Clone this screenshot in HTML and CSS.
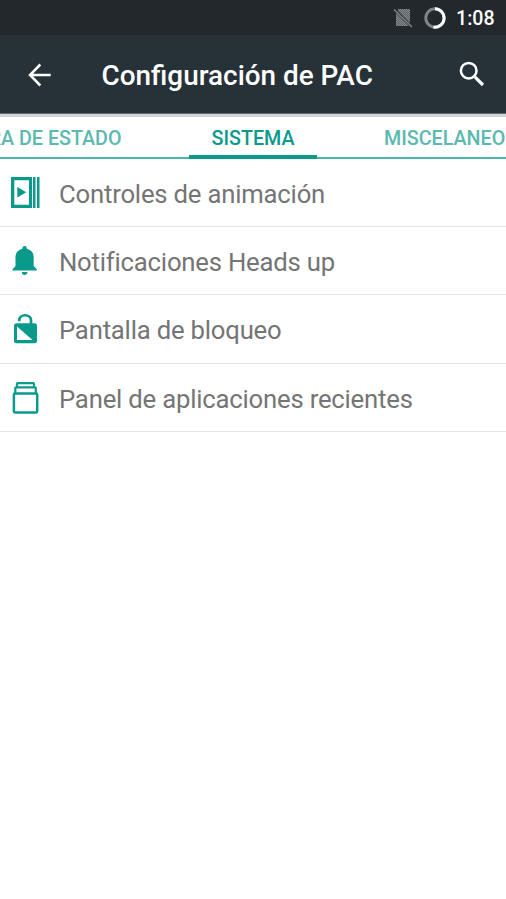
FILE: index.html
```html
<!DOCTYPE html>
<html lang="es">
<head>
<meta charset="utf-8">
<title>Configuración de PAC</title>
<link rel="stylesheet" href="styles.css">
</head>
<body>
<div class="status">
  <svg class="signal" width="20" height="20" viewBox="0 0 20 20">
    <defs><pattern id="mesh" width="2" height="2" patternUnits="userSpaceOnUse"><rect width="2" height="2" fill="#5d6265"/><rect width="1" height="1" fill="#85898b"/><rect x="1" y="1" width="1" height="1" fill="#85898b"/></pattern></defs>
    <path d="M5 1H17V15L5 3Z" fill="url(#mesh)"/>
    <path d="M3 5L16 18H3Z" fill="url(#mesh)"/>
    <path d="M1 1.5L19 19" stroke="#85898b" stroke-width="1.3"/>
  </svg>
  <svg class="ring" width="22" height="22" viewBox="0 0 22 22" fill="none" stroke-width="3">
    <circle cx="11" cy="11" r="9.2" stroke="#808487"/>
    <path d="M11 1.8A9.2 9.2 0 1 1 9.5 20.1" stroke="#fff"/>
  </svg>
  <span class="clock">1:08</span>
</div>
<header class="bar">
  <svg class="back" width="24" height="24" viewBox="0 0 24 24" fill="none" stroke="#fff" stroke-width="2.5"><path d="M12.3 1.5L2 12L12.3 22.5M2 12H22.7"/></svg>
  <h1>Configuración de PAC</h1>
  <svg class="search" width="26" height="26" viewBox="0 0 26 26" fill="none" stroke="#fff"><circle cx="9.7" cy="9.7" r="7.8" stroke-width="2.5"/><path d="M15.8 15.8L24 24" stroke-width="3.2"/></svg>
</header>
<nav class="tabs">
  <span class="tab tab-prev">BARRA DE ESTADO</span>
  <span class="tab tab-active">SISTEMA</span>
  <span class="tab tab-next">MISCELANEO</span>
</nav>
<main>
  <div class="row">
    <svg width="59" height="68" viewBox="0 0 59 68" fill="#0a9a8b">
      <path fill-rule="evenodd" d="M11 18H32V49H11ZM14.3 21.2V45.8H29V21.2Z"/>
      <path d="M17.3 28L26.3 33.2L17.3 38.4ZM33 18H35.5V49H33ZM37 18H39.5V49H37Z"/>
    </svg>
    <span class="label">Controles de animación</span>
  </div>
  <div class="row">
    <svg width="59" height="68" viewBox="0 0 59 68" fill="#0a9a8b">
      <path d="M12.5 43.5V42.2L15.5 39V30.5C15.5 25.5 18 22.7 22.4 21.7V21.2A2.2 2.2 0 0 1 26.8 21.2V21.7C31.2 22.7 33.7 25.5 33.7 30.5V39L36.8 42.2V43.5ZM21.8 45H27.5C27.3 46.9 26.3 48 24.6 48S22 46.9 21.8 45Z"/>
    </svg>
    <span class="label">Notificaciones Heads up</span>
  </div>
  <div class="row">
    <svg width="59" height="68" viewBox="0 0 59 68">
      <rect x="14" y="28.2" width="23" height="20" rx="2.5" fill="#0a9a8b"/>
      <path d="M17 31.5V45H32.5Z" fill="#fff"/>
      <path d="M19.2 26.3V25.5C19.2 18.5 31 18.5 31 25.5V30" fill="none" stroke="#0a9a8b" stroke-width="2.7"/>
    </svg>
    <span class="label">Pantalla de bloqueo</span>
  </div>
  <div class="row">
    <svg width="59" height="68" viewBox="0 0 59 68" fill="none" stroke="#0a9a8b" stroke-width="2.5">
      <rect x="13.9" y="29.5" width="23.3" height="19" rx="1.2"/>
      <path d="M15.3 29V24Q15.3 23.3 16 23.3H35Q35.8 23.3 35.8 24V29M17 23V19.9Q17 19.2 17.7 19.2H33.2Q34 19.2 34 19.9V23" stroke-width="2.2"/>
    </svg>
    <span class="label">Panel de aplicaciones recientes</span>
  </div>
</main>
</body>
</html>
```

FILE: styles.css
```css
* { box-sizing: border-box; }
body {
  margin: 0;
  height: 899px;
  overflow: hidden;
  background: #fff;
  font-family: Roboto, "Liberation Sans", sans-serif;
}
svg { display: block; flex: none; }
.status {
  display: flex;
  align-items: center;
  height: 35px;
  padding: 0 10px 0 393px;
  background: #22282c;
  color: #fff;
}
.ring { margin-left: 11px; }
.clock {
  margin: 2px 0 0 10px;
  font-size: 19.6px;
  font-weight: 500;
  white-space: nowrap;
}
.bar {
  display: flex;
  align-items: center;
  height: 79px;
  padding: 0 21px 0 28px;
  border-bottom: 1px solid #626b6f;
  background: #263238;
  color: #fff;
}
.bar h1 {
  flex: 1;
  margin: 3px 0 0 49.5px;
  font-size: 27.9px;
  font-weight: 500;
  white-space: nowrap;
}
.back { margin-top: 1px; }
.search { margin-top: -1px; }
.tabs {
  display: grid;
  grid-template-columns: 189px 128px 189px;
  height: 45px;
  border-top: 3px solid #d4d4d4;
  background: linear-gradient(#4db6ac, #4db6ac) 0 100% / 100% 2px no-repeat;
  overflow: hidden;
}
.tab {
  display: flex;
  height: 42px;
  line-height: 44px;
  color: #5bb9af;
  font-size: 19.7px;
  font-weight: 500;
  white-space: nowrap;
}
.tab-prev { justify-content: flex-end; padding-right: 67.5px; }
.tab-active {
  justify-content: center;
  border-bottom: 4px solid #0a9a8b;
  color: #0a9a8b;
}
.tab-next { padding-left: 67px; }
.row {
  display: flex;
  align-items: flex-start;
  height: 68.2px;
  border-bottom: 1px solid #e4e4e4;
}
.label {
  color: #757575;
  font-size: 25.7px;
  letter-spacing: -0.2px;
  line-height: 70px;
  white-space: nowrap;
}
```
